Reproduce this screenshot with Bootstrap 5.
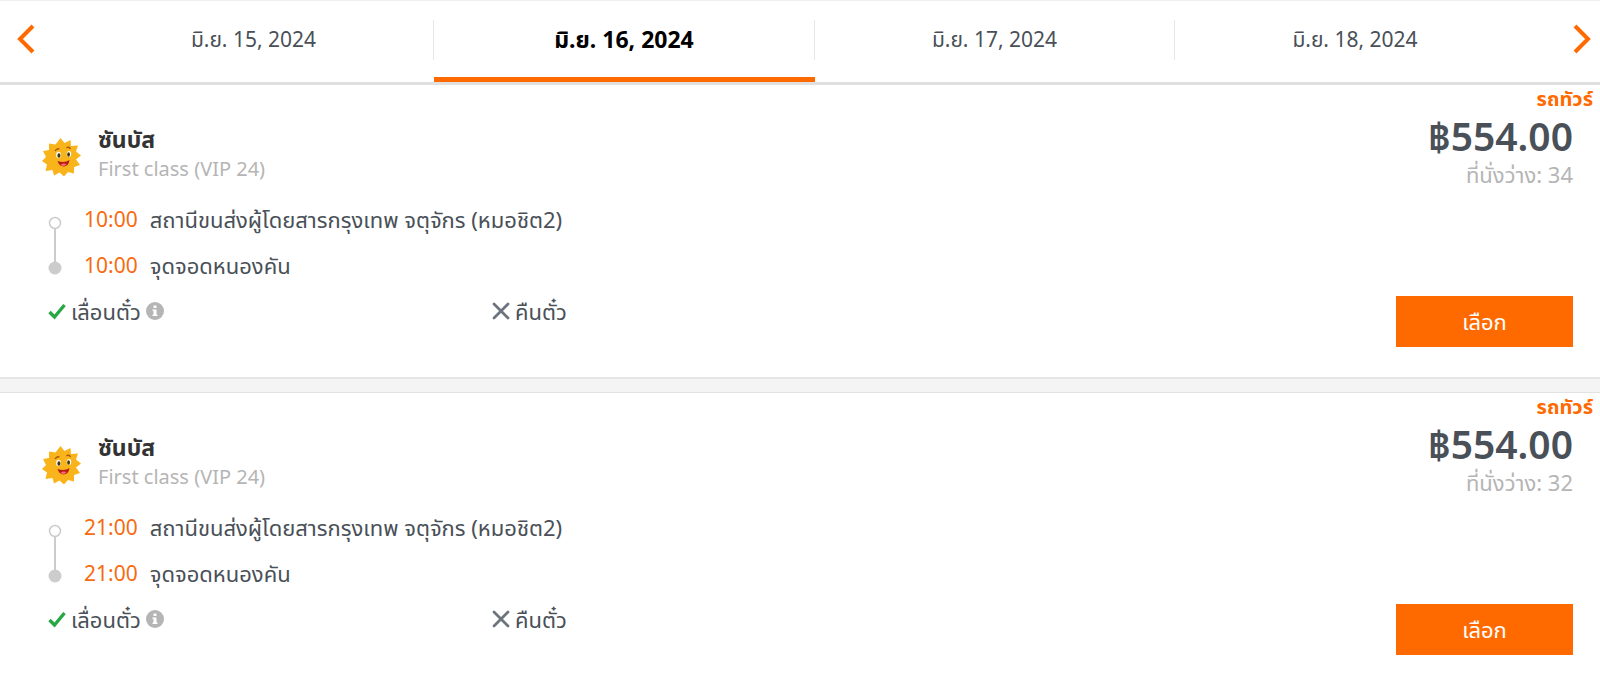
<!DOCTYPE html>
<html lang="th">
<head>
<meta charset="utf-8">
<meta name="viewport" content="width=device-width, initial-scale=1">
<title>มิ.ย. 16, 2024</title>
<link href="https://cdn.jsdelivr.net/npm/bootstrap@5.3.0/dist/css/bootstrap.min.css" rel="stylesheet">
<style>
  body { font-family: "Noto Sans", "Noto Sans Thai", "Open Sans", sans-serif; font-size: 22px; line-height: 30px; color: #495057; background: #fff; }
  .date-bar { height: 85px; border-top: 1px solid #f0f0f0; border-bottom: 3px solid #e0e0e0; }
  .arrow { width: 74px; height: 76px; color: #ff6a00; }
  .arrow.next { width: 65px; }
  .date-tab { flex: 360 1 0; height: 81px; color: #495057; font-size: 21px; }
  .date-tab.active { flex-grow: 381; color: #000; font-weight: 700; font-size: 23px; border-bottom: 5px solid #ff6a00; }
  .date-tab span { height: 40px; margin-top: 19px; padding-top: 4px; border-right: 1px solid #e6e6e6; }
  .date-tab:last-child span { border-right: 0; }
  .trip { height: 292px; }
  .gap-strip { height: 16px; background: #f4f4f4; border-top: 2px solid #e6e6e6; border-bottom: 1px solid #e2e2e2; }
  .kind { font-size: 20px; line-height: 28px; font-weight: 700; color: #ff6a00; padding-right: 7px; }
  .operator { color: #333; font-weight: 700; font-size: 23px; }
  .soft { color: #b5b5b5; }
  .coach { font-size: 20px; }
  .brand-row { padding: 11px 0 0 42px; gap: 16px; }
  .brand-row svg { margin-top: 6px; }
  .stops { padding: 20px 0 0 48px; }
  .rail { width: 36px; padding-top: 12px; }
  .stop { height: 46px; gap: 12px; }
  .stop time { color: #f76b10; font-size: 21px; }
  .terms { padding-left: 48px; }
  .term { width: 444px; gap: 5px; }
  .buy { width: 177px; margin-right: 27px; }
  .price { font-size: 39px; line-height: 46px; font-weight: 600; }
  .btn-pick { height: 51px; background: #ff6a00; color: #fff; border-radius: 0; font-size: 22px; margin-top: 107px; border: 0; }
  .btn-pick:hover { background: #e65f00; color: #fff; }
</style>
</head>
<body>
<svg class="d-none">
  <defs>
    <radialGradient id="sunFill" cx=".4" cy=".35" r=".65"><stop offset="0" stop-color="#ffe04a"/><stop offset=".65" stop-color="#fcc220"/><stop offset="1" stop-color="#f6ae17"/></radialGradient>
  </defs>
  <symbol id="sun" viewBox="0 0 40 40">
    <path fill="#f8b41a" d="M18.500 1l4 5 6-3 .5 6 7-.5-2 6 5 4-5 4 4 5.500-6 2 0 6.500-6-1.500-4 4.500-4.500-4-5.500 3-1.500-5.500-7 1 1.500-6.500-5-3.500 4-4-3-6 6-1 0-6.500 6.500 1z"/>
    <circle cx="19" cy="20" r="14" fill="url(#sunFill)"/>
    <ellipse cx="16.500" cy="18" rx="2.300" ry="3.200" fill="#fff"/><ellipse cx="27" cy="17" rx="2.200" ry="3" fill="#fff"/>
    <ellipse cx="16.900" cy="18.500" rx="1.500" ry="2.300" fill="#3a3a12"/><ellipse cx="26.600" cy="17.500" rx="1.400" ry="2.200" fill="#3a3a12"/>
    <path d="M13 14q2-3 4.500-2M24.500 11q2.500-2 4 1" fill="none" stroke="#a65510" stroke-width="1.300"/>
    <path d="M15.500 24q7 2.500 12-1-1 6.500-6 6.500-4.500-.5-6-5.500z" fill="#b51d14"/><path d="M18.500 28q3-2.500 6-.5-2.500 2.500-6 .5z" fill="#ff6a70"/>
  </symbol>
  <symbol id="line" viewBox="0 0 14 60">
    <path d="M7 12v38" stroke="#ccc" stroke-width="2"/><circle cx="7" cy="7" r="5.500" fill="#fff" stroke="#ccc" stroke-width="1.500"/><circle cx="7" cy="52" r="6.500" fill="#ccc"/>
  </symbol>
  <symbol id="tick" viewBox="0 0 18 18"><path d="M1.500 10l5 5L16.500 3" fill="none" stroke="#28a745" stroke-width="3.400"/></symbol>
  <symbol id="cross" viewBox="0 0 18 18"><path d="M2 2l14 14M16 2L2 16" fill="none" stroke="#6c757d" stroke-width="2.800" stroke-linecap="round"/></symbol>
  <symbol id="info" viewBox="0 0 18 18"><circle cx="9" cy="9" r="9" fill="#b5b5b5"/><path d="M7.500 3.500h3v2.500h-3zM6.500 7.500h4V12.500h1V14h-5v-1.500h1V9h-1z" fill="#fff"/></symbol>
</svg>

<nav class="date-bar d-flex" aria-label="วันเดินทาง">
  <button type="button" class="arrow btn p-0 border-0 flex-shrink-0 text-start ps-3" aria-label="ก่อนหน้า"><svg width="20" height="30" viewBox="0 0 20 30"><path d="M17 2L4 15l13 13" fill="none" stroke="currentColor" stroke-width="4"/></svg></button>
  <div class="d-flex flex-grow-1 text-center">
    <a href="#" class="date-tab text-decoration-none"><span class="d-block">มิ.ย. 15, 2024</span></a>
    <a href="#" class="date-tab active text-decoration-none" aria-current="date"><span class="d-block">มิ.ย. 16, 2024</span></a>
    <a href="#" class="date-tab text-decoration-none"><span class="d-block">มิ.ย. 17, 2024</span></a>
    <a href="#" class="date-tab text-decoration-none"><span class="d-block">มิ.ย. 18, 2024</span></a>
  </div>
  <button type="button" class="arrow next btn p-0 border-0 flex-shrink-0 text-end pe-2" aria-label="ถัดไป"><svg width="20" height="30" viewBox="0 0 20 30"><path d="M3 2l13 13L3 28" fill="none" stroke="currentColor" stroke-width="4"/></svg></button>
</nav>

<main>
  <article class="trip">
    <div class="kind text-end">รถทัวร์</div>
    <div class="d-flex justify-content-between">
      <div class="flex-grow-1">
        <div class="brand-row d-flex align-items-center">
          <svg width="40" height="40"><use href="#sun"/></svg>
          <div><div class="operator">ซันบัส</div><div class="soft coach">First class (VIP 24)</div></div>
        </div>
        <div class="stops d-flex">
          <div class="rail"><svg class="d-block" width="14" height="60"><use href="#line"/></svg></div>
          <div>
            <div class="stop d-flex"><time>10:00</time><span>สถานีขนส่งผู้โดยสารกรุงเทพ จตุจักร (หมอชิต2)</span></div>
            <div class="stop d-flex"><time>10:00</time><span>จุดจอดหนองคัน</span></div>
          </div>
        </div>
        <div class="terms d-flex">
          <div class="term d-flex align-items-center"><svg width="18" height="18"><use href="#tick"/></svg><span>เลื่อนตั๋ว</span><svg width="18" height="18"><use href="#info"/></svg></div>
          <div class="term d-flex align-items-center"><svg width="18" height="18"><use href="#cross"/></svg><span>คืนตั๋ว</span></div>
        </div>
      </div>
      <div class="buy text-end">
        <div class="price">฿554.00</div>
        <div class="soft">ที่นั่งว่าง: 34</div>
        <button type="button" class="btn btn-pick w-100">เลือก</button>
      </div>
    </div>
  </article>
  <div class="gap-strip"></div>
  <article class="trip">
    <div class="kind text-end">รถทัวร์</div>
    <div class="d-flex justify-content-between">
      <div class="flex-grow-1">
        <div class="brand-row d-flex align-items-center">
          <svg width="40" height="40"><use href="#sun"/></svg>
          <div><div class="operator">ซันบัส</div><div class="soft coach">First class (VIP 24)</div></div>
        </div>
        <div class="stops d-flex">
          <div class="rail"><svg class="d-block" width="14" height="60"><use href="#line"/></svg></div>
          <div>
            <div class="stop d-flex"><time>21:00</time><span>สถานีขนส่งผู้โดยสารกรุงเทพ จตุจักร (หมอชิต2)</span></div>
            <div class="stop d-flex"><time>21:00</time><span>จุดจอดหนองคัน</span></div>
          </div>
        </div>
        <div class="terms d-flex">
          <div class="term d-flex align-items-center"><svg width="18" height="18"><use href="#tick"/></svg><span>เลื่อนตั๋ว</span><svg width="18" height="18"><use href="#info"/></svg></div>
          <div class="term d-flex align-items-center"><svg width="18" height="18"><use href="#cross"/></svg><span>คืนตั๋ว</span></div>
        </div>
      </div>
      <div class="buy text-end">
        <div class="price">฿554.00</div>
        <div class="soft">ที่นั่งว่าง: 32</div>
        <button type="button" class="btn btn-pick w-100">เลือก</button>
      </div>
    </div>
  </article>
</main>
<script src="https://cdn.jsdelivr.net/npm/bootstrap@5.3.0/dist/js/bootstrap.bundle.min.js"></script>
</body>
</html>
